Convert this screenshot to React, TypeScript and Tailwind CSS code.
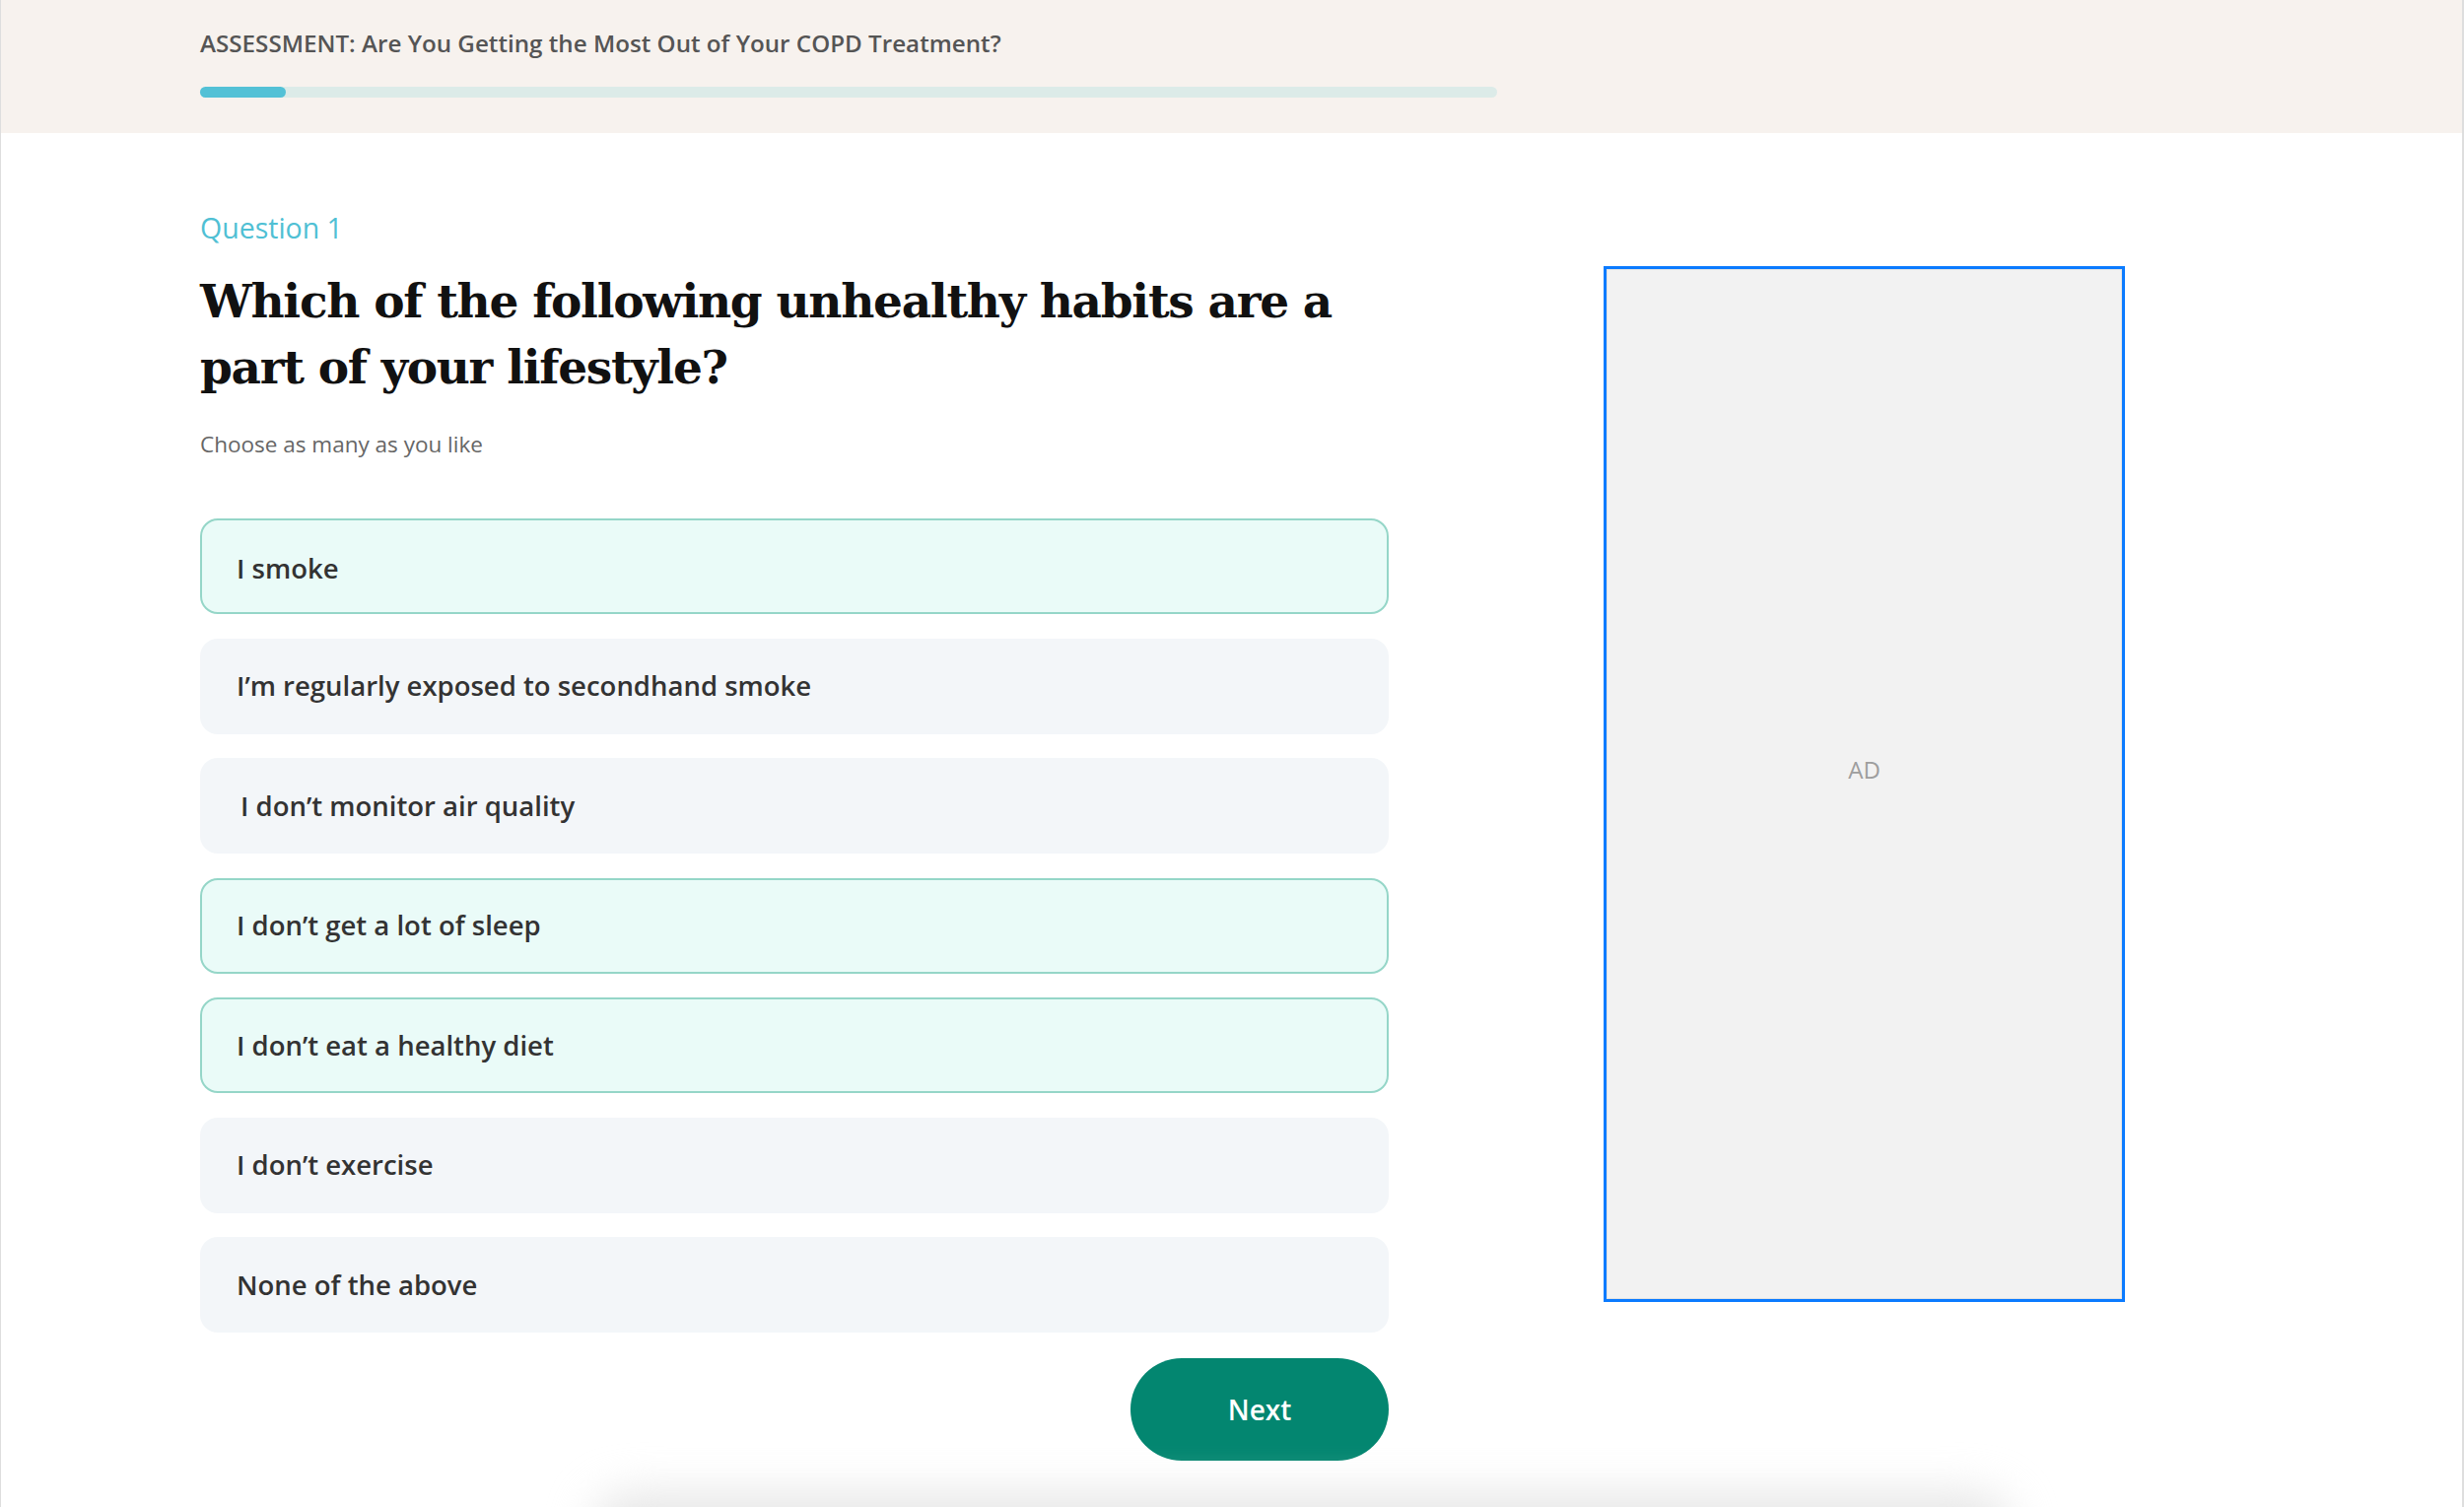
import React, { useState } from "react";

const options = [
  { label: "I smoke", selected: true, nudge: true },
  { label: "I\u2019m regularly exposed to secondhand smoke", selected: false },
  { label: "I don\u2019t monitor air quality", selected: false, indent: true },
  { label: "I don\u2019t get a lot of sleep", selected: true },
  { label: "I don\u2019t eat a healthy diet", selected: true },
  { label: "I don\u2019t exercise", selected: false },
  { label: "None of the above", selected: false },
];

export default function App() {
  const [picked, setPicked] = useState<boolean[]>(options.map((o) => o.selected));

  const toggle = (i: number) => {
    setPicked((prev) => prev.map((v, j) => (j === i ? !v : v)));
  };

  return (
    <div className="relative h-[1529px] w-full overflow-hidden border-l border-r-2 border-[#dedede] bg-white font-['Open_Sans',sans-serif]">
      {/* header with progress */}
      <div className="h-[135px] bg-[#f7f2ee] pl-[202px] pt-[28px]">
        <p className="text-[24.2px] leading-[32px] font-semibold text-[#555]">
          ASSESSMENT: Are You Getting the Most Out of Your COPD Treatment?
        </p>
        <div className="mt-[28px] h-[11px] w-[1316px] rounded-full bg-[#dcebe8]">
          <div className="h-full w-[87px] rounded-full bg-[#53c1d6]" />
        </div>
      </div>

      <div className="flex items-start pl-[202px]">
        {/* question column */}
        <div className="w-[1206px] pt-[77px]">
          <p className="text-[28.5px] leading-[38px] text-[#4fc0d4]">Question 1</p>
          <h1 className="mt-[22px] whitespace-nowrap font-['DejaVu_Serif',serif] text-[47px] leading-[67px] font-bold tracking-[-1.3px] text-[#111]">
            Which of the following unhealthy habits are a
            <br />
            part of your lifestyle?
          </h1>
          <p className="mt-[30px] text-[22.5px] leading-[30px] text-[#666]">Choose as many as you like</p>

          <div className="mt-[60px] flex flex-col gap-[24.5px]">
            {options.map((o, i) => (
              <button
                key={o.label}
                type="button"
                onClick={() => toggle(i)}
                className={
                  "flex h-[97px] items-center rounded-[18px] border-2 pr-[35px] text-left text-[27.5px] font-semibold text-[#333] " +
                  (o.indent ? "pl-[39px] " : "pl-[35px] ") +
                  (o.nudge ? "pt-[5px] " : "") +
                  (picked[i] ? "border-[#95d6c8] bg-[#eafbf8]" : "border-transparent bg-[#f3f6f9]")
                }
              >
                {o.label}
              </button>
            ))}
          </div>

          <div className="mt-[26px] flex justify-end">
            <button
              type="button"
              className="flex h-[104px] w-[262px] items-center justify-center rounded-full bg-[#038670] text-[28px] font-semibold text-white"
            >
              Next
            </button>
          </div>
        </div>

        {/* ad slot */}
        <div className="ml-[218px] mt-[135px] flex h-[1051px] w-[529px] items-center justify-center border-[3px] border-[#0b7bff] bg-[#f2f2f2] pb-[30px] shadow-[inset_0_0_0_1px_#e2e2e2]">
          <span className="text-[24px] text-[#9e9e9e]">AD</span>
        </div>
      </div>

      {/* soft shadow of a footer just below the fold */}
      <div className="pointer-events-none absolute left-[600px] top-[1515px] h-[80px] w-[1440px] rounded-[40px] bg-[#e6e6e6] blur-[22px]" />
    </div>
  );
}
